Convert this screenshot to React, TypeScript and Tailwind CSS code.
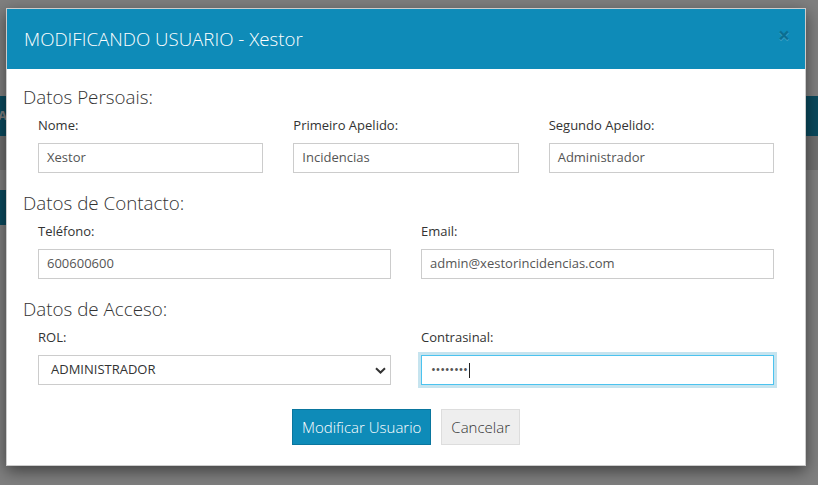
import React from "react";

const font = { fontFamily: '"Open Sans", "Noto Sans", sans-serif' };

function Field({ label, value }: { label: string; value: string }) {
  return (
    <div className="flex flex-col">
      <div className="h-[18px] text-[13px] leading-[18px] text-[#333]">{label}</div>
      <div className="mt-[9px] flex h-[30px] items-center border border-[#ccc] bg-white pl-[8px] text-[13px] text-[#555]">
        {value}
      </div>
    </div>
  );
}

function Heading({ children }: { children: React.ReactNode }) {
  return <div className="h-[22px] text-[18.8px] font-light leading-[22px] text-[#333]">{children}</div>;
}

export default function App() {
  return (
    <div className="relative h-[485px] w-[818px] overflow-hidden bg-white" style={font}>
      {/* page behind the modal */}
      <div className="h-[8px]" />
      <div className="flex h-[88px]">
        <div className="ml-[285px] h-[30px] w-[142px] bg-[#146a8a]" />
        <div className="ml-[14px] h-[30px] w-[86px] bg-[#146a8a]" />
      </div>
      <div className="flex h-[40px] items-center bg-[#1494bc] text-[13px] font-bold text-white">
        <span className="-ml-[2px]">A</span>
      </div>
      <div className="h-[34px] bg-[#e0e0e0]" />
      <div className="h-[20px]" />
      <div className="h-[35px] w-[200px] bg-[#1494bc]" />

      {/* overlay */}
      <div className="absolute inset-0 bg-black/50">
        <div className="ml-[6px] mt-[8px] w-[800px] border border-black/20 bg-white shadow-[0_5px_15px_rgba(0,0,0,0.5)]">
          <div className="flex h-[60px] items-center bg-[#0e8bb8] pl-[17px] pr-[15px]">
            <div className="text-[18.7px] font-light leading-[22px] text-white">MODIFICANDO USUARIO - Xestor</div>
            <div className="mb-[8px] ml-auto text-[21px] font-bold leading-[21px] text-black opacity-20 [text-shadow:0_1px_0_#fff]">
              ×
            </div>
          </div>
          <div className="px-[16px] pb-[20px] pt-[17px]">
            <Heading>Datos Persoais:</Heading>
            <div className="mt-[8px] grid grid-cols-3 gap-x-[30px] px-[15px]">
              <Field label="Nome:" value="Xestor" />
              <Field label="Primeiro Apelido:" value="Incidencias" />
              <Field label="Segundo Apelido:" value="Administrador" />
            </div>
            <div className="mt-[19px]">
              <Heading>Datos de Contacto:</Heading>
            </div>
            <div className="mt-[8px] grid grid-cols-2 gap-x-[30px] px-[15px]">
              <Field label="Teléfono:" value="600600600" />
              <Field label="Email:" value="admin@xestorincidencias.com" />
            </div>
            <div className="mt-[19px]">
              <Heading>Datos de Acceso:</Heading>
            </div>
            <div className="mt-[8px] grid grid-cols-2 gap-x-[30px] px-[15px]">
              <div className="flex flex-col">
                <div className="h-[18px] text-[13px] leading-[18px] text-[#333]">ROL:</div>
                <div className="mt-[9px] flex h-[30px] items-center border border-[#ccc] bg-white pl-[12px] pr-[4px] text-[13px] text-[#333]">
                  <span>ADMINISTRADOR</span>
                  <svg className="ml-auto" width="11" height="7" viewBox="0 0 11 7">
                    <path d="M1 1.2 L5.5 5.5 L10 1.2" fill="none" stroke="#333" strokeWidth="2" />
                  </svg>
                </div>
              </div>
              <div className="flex flex-col">
                <div className="h-[18px] text-[13px] leading-[18px] text-[#333]">Contrasinal:</div>
                <div className="mt-[9px] flex h-[30px] items-center border border-[#4cc3ef] bg-white pl-[9px] text-[13px] text-[#555] shadow-[0_0_0_3px_#c6e4ef]">
                  <span className="tracking-[-0.3px]">••••••••</span>
                  <span className="ml-[1px] h-[15px] w-px bg-[#222]" />
                </div>
              </div>
            </div>
            <div className="mt-[24px] flex justify-center gap-[10px]">
              <button className="h-[36px] border border-[#0a769e] bg-[#0e8bb8] px-[9px] text-[15px] font-light text-white">
                Modificar Usuario
              </button>
              <button className="h-[36px] border border-[#ddd] bg-[#eee] px-[9px] text-[15px] font-light text-[#333]">
                Cancelar
              </button>
            </div>
          </div>
        </div>
      </div>
    </div>
  );
}
